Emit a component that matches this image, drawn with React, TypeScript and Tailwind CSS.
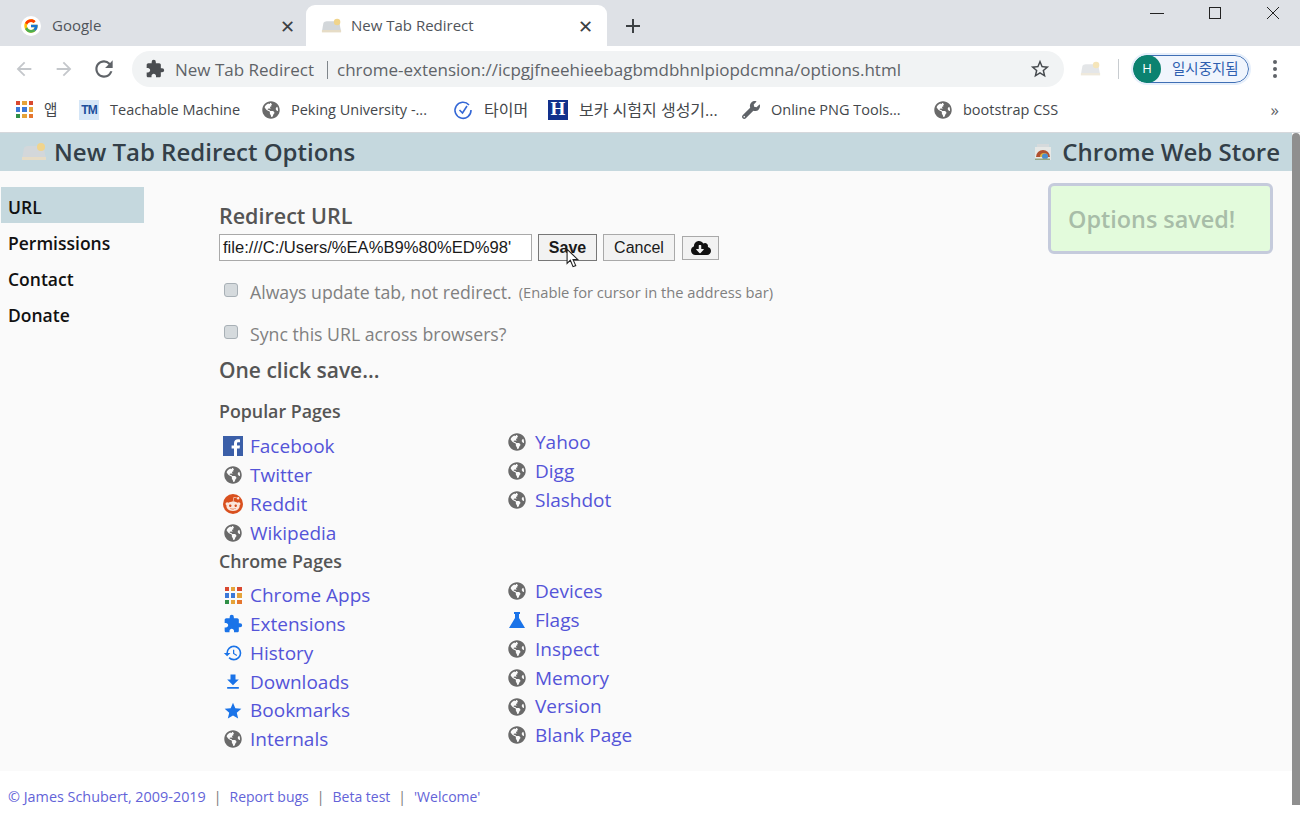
import { FcGoogle } from 'react-icons/fc'
import { FaCloudDownloadAlt, FaGlobeAmericas, FaRedditAlien, FaWrench } from 'react-icons/fa'
import {
  MdArrowBack,
  MdArrowForward,
  MdExtension,
  MdFileDownload,
  MdHistory,
  MdRefresh,
  MdStar,
  MdStarBorder,
} from 'react-icons/md'
import type { ReactNode } from 'react'

const Weather = ({ className }: { className: string }) => (
  <svg viewBox="0 0 26 20" className={className}>
    <path d="M1 17 L3 6 Q4 4 7 4 L21 4 L23 7 L25 17 Z" fill="#d3d7da" />
    <circle cx="20" cy="5" r="4" fill="#f0d48c" />
    <rect x="1" y="15" width="24" height="3" fill="#e6dcc6" />
  </svg>
)

const Store = () => (
  <svg viewBox="0 0 18 18" className="w-[18px] h-[18px]">
    <rect x="3" y="1" width="12" height="4" fill="#d5dadc" />
    <rect x="1" y="4" width="16" height="13" fill="#e6e8e6" />
    <path d="M2 14 A7 7 0 0 1 16 14 Z" fill="#b0502f" />
    <path d="M6 14 A3.5 3.5 0 0 1 14 14 Z" fill="#dcb23e" />
    <circle cx="11" cy="13.5" r="3" fill="#4a8ed0" />
    <rect x="1" y="15.5" width="15" height="1.5" fill="#93a584" />
  </svg>
)

const AppsGrid = ({ size }: { size: string }) => {
  const colors = ['#d9482f', '#e5a33a', '#d9482f', '#3b78d8', '#3b78d8', '#e5a33a', '#2f8f46', '#e5a33a', '#e5762f']
  return (
    <span className={`grid grid-cols-3 gap-[2px] ${size}`}>
      {colors.map((c, i) => (
        <span key={i} className="block" style={{ backgroundColor: c }} />
      ))}
    </span>
  )
}

const Globe = ({ className = 'text-[#6a6a6a]' }: { className?: string }) => (
  <FaGlobeAmericas className={`w-[18px] h-[18px] ${className}`} />
)

const Facebook = () => (
  <svg viewBox="0 0 20 20" className="w-5 h-5">
    <rect width="20" height="20" fill="#3b5fa8" />
    <path d="M14 20 V12.5 H16.6 L17 9.5 H14 V7.6 C14 6.7 14.3 6.2 15.5 6.2 H17 V3.4 C16.6 3.3 15.8 3.3 14.9 3.3 C12.7 3.3 11 4.7 11 7.2 V9.5 H8.6 V12.5 H11 V20 Z" fill="#fff" />
  </svg>
)

const Reddit = () => (
  <span className="w-5 h-5 rounded-full bg-[#d9501e] flex items-center justify-center">
    <FaRedditAlien className="w-4 h-4 text-[#fbe6dc]" />
  </span>
)

const Flask = () => (
  <svg viewBox="0 0 18 18" className="w-[18px] h-[18px]">
    <path d="M6 1 H12 V3 H11 V7 L17 17 H1 L7 7 V3 H6 Z" fill="#1a73e8" />
  </svg>
)

type PageLink = { label: string; icon?: ReactNode }

const popularLeft: PageLink[] = [
  { label: 'Facebook', icon: <Facebook /> },
  { label: 'Twitter' },
  { label: 'Reddit', icon: <Reddit /> },
  { label: 'Wikipedia' },
]
const popularRight: PageLink[] = [{ label: 'Yahoo' }, { label: 'Digg' }, { label: 'Slashdot' }]
const chromeLeft: PageLink[] = [
  { label: 'Chrome Apps', icon: <AppsGrid size="w-[17px] h-[17px]" /> },
  { label: 'Extensions', icon: <MdExtension className="w-5 h-5 text-[#1a73e8]" /> },
  { label: 'History', icon: <MdHistory className="w-5 h-5 text-[#1a73e8]" /> },
  { label: 'Downloads', icon: <MdFileDownload className="w-5 h-5 text-[#1a73e8]" /> },
  { label: 'Bookmarks', icon: <MdStar className="w-5 h-5 text-[#1a73e8]" /> },
  { label: 'Internals' },
]
const chromeRight: PageLink[] = [
  { label: 'Devices' },
  { label: 'Flags', icon: <Flask /> },
  { label: 'Inspect' },
  { label: 'Memory' },
  { label: 'Version' },
  { label: 'Blank Page' },
]

const LinkColumn = ({ links, iconWidth, className }: { links: PageLink[]; iconWidth: string; className: string }) => (
  <ul className={className}>
    {links.map((link) => (
      <li key={link.label} className="flex items-center h-[28.8px]">
        <span className={`flex justify-center shrink-0 ${iconWidth}`}>{link.icon ?? <Globe />}</span>
        <span className="text-[#5454d8] text-[19px]">{link.label}</span>
      </li>
    ))}
  </ul>
)

const bookmarks: { label: string; icon: ReactNode; box: string }[] = [
  {
    label: '앱',
    icon: <AppsGrid size="w-[17px] h-[17px]" />,
    box: 'w-[63px]',
  },
  {
    label: 'Teachable Machine',
    icon: (
      <span className="w-5 h-5 bg-[#d5e6f7] text-[#1d4f9c] text-[12px] tracking-[-1px] font-bold flex items-center justify-center font-['Liberation_Sans',sans-serif]">TM</span>
    ),
    box: 'w-[183px]',
  },
  { label: 'Peking University -...', icon: <Globe />, box: 'w-[191px]' },
  {
    label: '타이머',
    icon: (
      <svg viewBox="0 0 20 20" className="w-5 h-5" fill="none" stroke="#3367d6" strokeWidth="1.6">
        <path d="M16 5 A8 8 0 1 0 18 10" />
        <path d="M6.5 10 L9.5 13 L14 6" />
      </svg>
    ),
    box: 'w-[95px] text-[16px]',
  },
  {
    label: '보카 시험지 생성기...',
    icon: (
      <span className="w-5 h-5 bg-[#12308c] text-white font-bold text-[19px] flex items-center justify-center font-['Liberation_Serif',serif]">H</span>
    ),
    box: 'w-[194px] text-[16px]',
  },
  { label: 'Online PNG Tools...', icon: <FaWrench className="w-[18px] h-[18px] text-[#5f6368]" />, box: 'w-[192px]' },
  { label: 'bootstrap CSS', icon: <Globe />, box: '' },
]

const App = () => (
  <div className="w-[1300px] h-[826px] overflow-hidden flex flex-col bg-white font-['Open_Sans','Noto_Sans_CJK_KR',sans-serif]">
    {/* Tab strip */}
    <div className="h-[46px] bg-[#dee1e6] flex items-end shrink-0 relative">
      <div className="w-[306px] h-[41px] flex items-center pl-[21px] pr-[11px] text-[15px] text-[#50545a]">
        <span className="w-5 h-5 rounded-full bg-white flex items-center justify-center mr-[11px]">
          <FcGoogle className="w-4 h-4" />
        </span>
        <span>Google</span>
        <span className="ml-auto text-[#3c4043] text-[18px] leading-none">✕</span>
      </div>
      <div className="w-[301px] h-[41px] bg-white rounded-t-[9px] flex items-center pl-[15px] pr-[14px] text-[15px] text-[#50545a]">
        <Weather className="w-[21px] h-[16px] mr-[9px]" />
        <span>New Tab Redirect</span>
        <span className="ml-auto text-[#3c4043] text-[18px] leading-none">✕</span>
      </div>
      <span className="ml-[18px] h-[41px] flex items-center">
        <svg viewBox="0 0 16 16" className="w-4 h-4" stroke="#3c4043" strokeWidth="2">
          <path d="M8 1 V15 M1 8 H15" />
        </svg>
      </span>
      {/* Window controls */}
      <div className="ml-auto self-start flex items-center h-[26px] pr-[20px] gap-[44px]">
        <svg viewBox="0 0 14 14" className="w-[14px] h-[14px]" stroke="#222" strokeWidth="1">
          <path d="M0 7.5 H14" />
        </svg>
        <svg viewBox="0 0 14 14" className="w-[14px] h-[14px]" stroke="#222" strokeWidth="1" fill="none">
          <rect x="1.5" y="1.5" width="11" height="11" />
        </svg>
        <svg viewBox="0 0 14 14" className="w-[14px] h-[14px]" stroke="#222" strokeWidth="1">
          <path d="M1 1 L13 13 M13 1 L1 13" />
        </svg>
      </div>
    </div>

    {/* Toolbar */}
    <div className="h-[46px] flex items-center shrink-0">
      <MdArrowBack className="w-[22px] h-[22px] text-[#c4c7cb] ml-[13px]" />
      <MdArrowForward className="w-[22px] h-[22px] text-[#c4c7cb] ml-[18px]" />
      <MdRefresh className="w-[26px] h-[26px] text-[#5f6368] ml-[16px]" />
      <div className="ml-[15px] w-[932px] h-[36px] rounded-full bg-[#f1f3f4] flex items-center pl-[13px] pr-[13px] pt-[2px] text-[17px] text-[#5f6368]">
        <MdExtension className="w-[20px] h-[20px] text-[#4a4d51] mr-[10px] -translate-y-px" />
        <span className="whitespace-nowrap">New Tab Redirect</span>
        <span className="ml-[13px] mr-[9px] h-[18px] w-px bg-[#80868b]" />
        <span className="whitespace-nowrap">chrome-extension://icpgjfneehieebagbmdbhnlpiopdcmna/options.html</span>
        <MdStarBorder className="w-[22px] h-[22px] text-[#45494d] ml-auto -translate-y-px" />
      </div>
      <Weather className="w-[21px] h-[16px] ml-[16px] opacity-60" />
      <span className="w-px h-[20px] bg-[#c8ccd0] ml-[17px]" />
      <div className="ml-[14px] w-[116px] h-[28px] rounded-full border border-[#3f6fb5] bg-[#f0f5fd] flex items-center text-[14.5px] text-[#2f5fb0] outline-2 outline-[#e6effb]">
        <span className="w-[28px] h-[28px] rounded-full bg-[#0b8270] text-white text-[13px] flex items-center justify-center -ml-px shrink-0">H</span>
        <span className="ml-[11px] whitespace-nowrap">일시중지됨</span>
      </div>
      <span className="ml-[24px] flex flex-col gap-[3px]">
        <span className="w-[4px] h-[4px] rounded-full bg-[#5f6368]" />
        <span className="w-[4px] h-[4px] rounded-full bg-[#5f6368]" />
        <span className="w-[4px] h-[4px] rounded-full bg-[#5f6368]" />
      </span>
    </div>

    {/* Bookmarks bar */}
    <div className="h-[41px] flex items-center shrink-0 pl-[16px] pb-[5px] text-[14.5px] text-[#44474b] border-b border-[#d5d8dc] relative">
      {bookmarks.map((b) => (
        <span key={b.label} className={`flex items-center gap-[11px] shrink-0 whitespace-nowrap ${b.box}`}>
          {b.icon}
          <span>{b.label}</span>
        </span>
      ))}
      <span className="ml-auto pr-[21px] text-[17px] text-[#5f6368] leading-none">»</span>
    </div>

    {/* Page */}
    <div className="flex-1 min-h-0 flex">
      <div className="flex-1 min-w-0 flex flex-col relative">
        <header className="h-[38px] bg-[#c5d8de] flex items-center justify-between pl-[21px] pr-[12px] pb-[1px] text-[#333f48] font-semibold text-[24px] shrink-0">
          <span className="flex items-center gap-[7px]">
            <Weather className="w-[26px] h-[20px]" />
            New Tab Redirect Options
          </span>
          <span className="flex items-center gap-[10px]">
            <Store />
            Chrome Web Store
          </span>
        </header>

        <div className="flex-1 min-h-0 bg-[#fafafa] flex pt-[16px]">
          <nav className="w-[143px] ml-px shrink-0 text-[17.5px] font-semibold text-[#111] flex flex-col">
            <a className="h-[36px] bg-[#c5d8de] pl-[7px] pt-[5px] flex items-center">URL</a>
            <a className="h-[36px] pl-[7px] pt-[5px] flex items-center">Permissions</a>
            <a className="h-[36px] pl-[7px] pt-[5px] flex items-center">Contact</a>
            <a className="h-[36px] pl-[7px] pt-[5px] flex items-center">Donate</a>
          </nav>

          <main className="ml-[75px] pt-[14px] text-[#555]">
            <h2 className="text-[21.5px] font-semibold leading-[30px]">Redirect URL</h2>
            <div className="flex items-center h-[27px] mt-[3px] font-['Liberation_Sans',sans-serif] text-[16px] text-[#1a1a1a]">
              <div className="w-[313px] h-[27px] border border-[#a9a9a9] bg-white pl-[3px] overflow-hidden whitespace-nowrap leading-[25px] text-[16.6px]">
                file:///C:/Users/%EA%B9%80%ED%98'
              </div>
              <button className="relative ml-[6px] w-[59px] h-[27px] border border-[#777] bg-[#f2f2f2] font-bold">
                Save
                <svg viewBox="0 0 12 18" className="absolute left-[27px] top-[13px] w-[13px] h-[20px]">
                  <path d="M1 1 V14 L4 11 L6.5 17 L9 16 L6.5 10.5 H11 Z" fill="#fff" stroke="#222" strokeWidth="1" />
                </svg>
              </button>
              <button className="ml-[6px] w-[72px] h-[27px] border border-[#a9a9a9] bg-[#f2f2f2]">Cancel</button>
              <button className="ml-[7px] w-[37px] h-[24px] border border-[#a9a9a9] bg-[#f2f2f2] flex items-center justify-center">
                <FaCloudDownloadAlt className="w-[20px] h-[20px] text-[#111]" />
              </button>
            </div>

            <label className="flex items-center h-[42px] mt-[10px] text-[#808080] text-[17.7px]">
              <span className="w-[14px] h-[14px] ml-[5px] mr-[12px] -translate-y-[2px] rounded-[3px] border border-[#a8b0b6] bg-[#d5dadd]" />
              Always update tab, not redirect.
              <span className="text-[14.7px] ml-[7px]">(Enable for cursor in the address bar)</span>
            </label>
            <label className="flex items-center h-[42px] text-[#808080] text-[17.7px]">
              <span className="w-[14px] h-[14px] ml-[5px] mr-[12px] -translate-y-[2px] rounded-[3px] border border-[#a8b0b6] bg-[#d5dadd]" />
              Sync this URL across browsers?
            </label>

            <h3 className="text-[21px] font-semibold leading-[30px]">One click save...</h3>
            <h4 className="text-[17.8px] font-semibold leading-[26px] mt-[13px]">Popular Pages</h4>
            <div className="flex mt-[4px] h-[118px]">
              <LinkColumn links={popularLeft} iconWidth="w-[31px] pl-[1px] pr-[4px]" className="w-[285px] pt-[4px]" />
              <LinkColumn links={popularRight} iconWidth="w-[31px] pr-[5px]" className="" />
            </div>
            <h4 className="text-[17.8px] font-semibold leading-[26px] mt-[2px]">Chrome Pages</h4>
            <div className="flex mt-[3px]">
              <LinkColumn links={chromeLeft} iconWidth="w-[31px] pl-[1px] pr-[4px]" className="w-[285px] pt-[4px]" />
              <LinkColumn links={chromeRight} iconWidth="w-[31px] pr-[5px]" className="" />
            </div>
          </main>
        </div>

        <footer className="h-[55px] bg-white flex items-center pl-[8px] text-[14px] text-[#6363d8] shrink-0 pb-[4px]">
          <span className="text-[14.4px]">© James Schubert, 2009-2019</span>
          <span className="mx-[8px] text-[#777]">|</span>
          <span>Report bugs</span>
          <span className="mx-[8px] text-[#777]">|</span>
          <span>Beta test</span>
          <span className="mx-[8px] text-[#777]">|</span>
          <span>'Welcome'</span>
        </footer>

        {/* Saved toast */}
        <div className="absolute left-[1048px] top-[50px] w-[225px] h-[71px] rounded-[6px] border-[3px] border-[#c5cbdc] bg-[#e3fbdc] flex items-center pl-[17px] pt-[2px] text-[#a8bda8] text-[23.4px] font-semibold">
          Options saved!
        </div>
      </div>

      {/* Scrollbar */}
      <div className="w-[8px] shrink-0 bg-white">
        <div className="h-[672px] bg-[#8f8f8f] rounded-t-[4px]" />
      </div>
    </div>
  </div>
)

export default App
